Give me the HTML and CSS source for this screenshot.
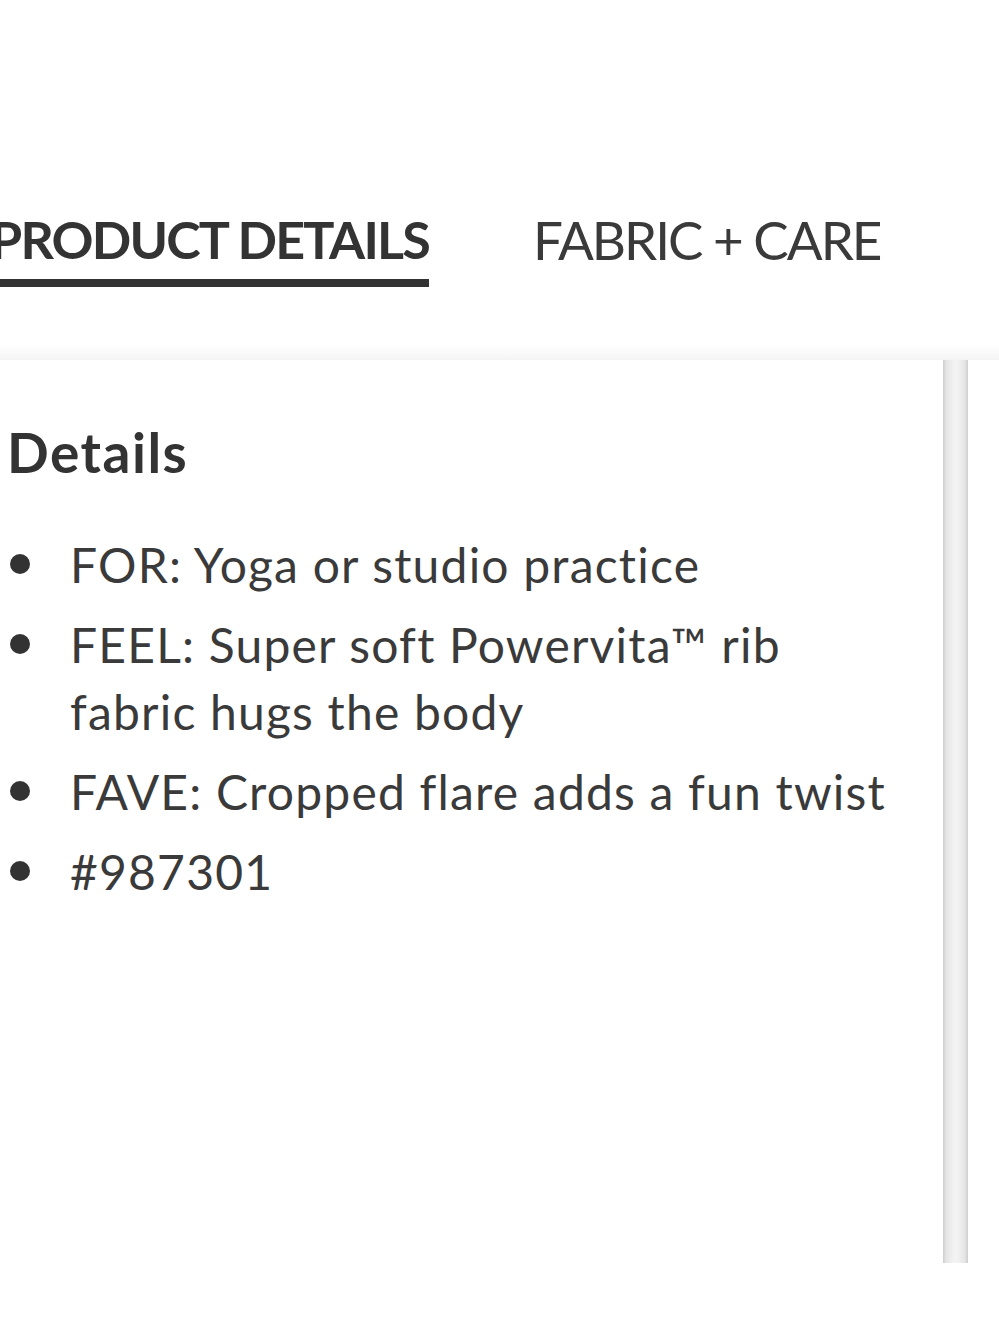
FILE: index.html
```html
<!DOCTYPE html>
<html lang="en">
<head>
<meta charset="utf-8">
<title>Product details</title>
<link rel="stylesheet" href="styles.css">
</head>
<body>
<div class="page">
  <nav class="tabs">
    <div class="tab tab-active">PRODUCT DETAILS</div>
    <div class="tab">FABRIC + CARE</div>
  </nav>
  <div class="shade"></div>
  <div class="cards">
    <section class="card card-main">
      <h2 class="card-title">Details</h2>
      <ul class="details">
        <li>FOR: Yoga or studio practice</li>
        <li>FEEL: Super soft Powervita™ rib fabric hugs the body</li>
        <li>FAVE: Cropped flare adds a fun twist</li>
        <li>#987301</li>
      </ul>
    </section>
    <div class="divider"></div>
    <section class="card card-next"></section>
  </div>
</div>
</body>
</html>
```

FILE: styles.css
```css
html, body {
  margin: 0;
  padding: 0;
  background: #ffffff;
}
body {
  font-family: Lato, "Open Sans", "Liberation Sans", sans-serif;
  color: #333333;
  overflow: hidden;
}
.page {
  width: 999px;
  height: 1333px;
  overflow: hidden;
}
.tabs {
  display: flex;
  align-items: flex-end;
  gap: 104px;
  margin-top: 213px;
  margin-left: -10px;
}
.tab {
  font-size: 53px;
  line-height: 53px;
  font-weight: 400;
  color: #3a3a3a;
  letter-spacing: -2px;
  padding-bottom: 13px;
  border-bottom: 8px solid transparent;
  white-space: nowrap;
}
.tab-active {
  font-weight: 700;
  font-size: 52px;
  color: #333333;
  letter-spacing: -1.8px;
  border-bottom-color: #333333;
  padding-right: 0;
}
.shade {
  height: 15px;
  margin-top: 58px;
  background: linear-gradient(to bottom, rgba(0,0,0,0) 0%, rgba(0,0,0,0.045) 100%);
}
.cards {
  display: flex;
  height: 903px;
}
.card {
  background: #ffffff;
}
.card-main {
  width: 943px;
  flex: 0 0 943px;
  padding-top: 62px;
  box-sizing: border-box;
}
.divider {
  flex: 0 0 25px;
  background: linear-gradient(to right, #cdcdcd 0px, #e4e4e4 3px, #f3f3f3 11px, #f3f3f3 14px, #e4e4e4 22px, #cdcdcd 25px);
}
.card-next {
  flex: 1 1 auto;
}
.card-title {
  margin: 0 0 49px 7px;
  font-size: 55px;
  line-height: 60px;
  font-weight: 700;
  letter-spacing: 1.5px;
  color: #333333;
}
.details {
  list-style: none;
  margin: 0;
  padding: 0;
}
.details li {
  position: relative;
  padding-left: 70px;
  font-size: 48px;
  line-height: 67px;
  letter-spacing: 1.2px;
  margin-bottom: 13px;
  color: #3a3a3a;
  max-width: 820px;
}
.details li::before {
  content: "";
  position: absolute;
  left: 10px;
  top: 23px;
  width: 20px;
  height: 20px;
  border-radius: 50%;
  background: #333333;
}
```
